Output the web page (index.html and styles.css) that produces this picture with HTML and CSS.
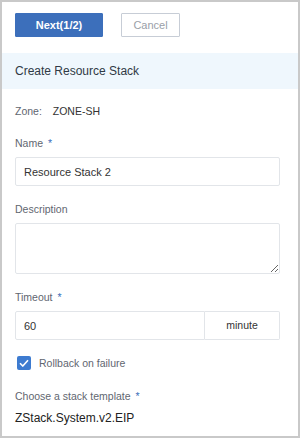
FILE: index.html
```html
<!DOCTYPE html>
<html lang="en">
<head>
    <meta charset="UTF-8">
    <meta name="viewport" content="width=device-width, initial-scale=1.0">
    <title>Create Resource Stack</title>
    <link rel="stylesheet" href="styles.css">
</head>
<body>
    <div class="panel">
        <!-- Actions -->
        <div class="toolbar">
            <button class="btn btn-primary">Next(1/2)</button>
            <button class="btn btn-default">Cancel</button>
        </div>

        <div class="section-title">Create Resource Stack</div>

        <div class="form">
            <div class="zone-row">
                <span class="zone-label">Zone:</span>
                <span class="zone-value">ZONE-SH</span>
            </div>

            <div class="form-group">
                <label>Name <span class="required">*</span></label>
                <input type="text" value="Resource Stack 2">
            </div>

            <div class="form-group">
                <label>Description</label>
                <textarea></textarea>
            </div>

            <div class="form-group">
                <label>Timeout <span class="required">*</span></label>
                <div class="input-group">
                    <input type="text" value="60">
                    <span class="addon">minute</span>
                </div>
            </div>

            <div class="check-row">
                <span class="checkbox">
                    <svg width="10" height="8" viewBox="0 0 10 8">
                        <path d="M1 4.2 L3.8 7 L9 1.2" fill="none" stroke="#fff" stroke-width="1.6"/>
                    </svg>
                </span>
                <span class="check-label">Rollback on failure</span>
            </div>

            <div class="template">
                <label>Choose a stack template <span class="required">*</span></label>
                <div class="template-name">ZStack.System.v2.EIP</div>
            </div>
        </div>
    </div>
</body>
</html>
```

FILE: styles.css
```css
* {
    margin: 0;
    padding: 0;
    box-sizing: border-box;
}

body {
    font-family: 'Liberation Sans', Arial, sans-serif;
    background: white;
    color: #333;
}

.panel {
    width: 300px;
    height: 438px;
    border: 2px solid #c9c9c9;
    overflow: hidden;
}

/* Top buttons */
.toolbar {
    display: flex;
    gap: 18px;
    padding: 11px 13px 16px;
}

.btn {
    height: 24px;
    font-family: inherit;
    font-size: 11px;
    border-radius: 1px;
}

.btn-primary {
    width: 88px;
    background: #3c6fbb;
    border: 1px solid #3c6fbb;
    color: white;
    font-weight: bold;
}

.btn-default {
    width: 59px;
    background: white;
    border: 1px solid #c7cdd6;
    color: #9aa0a8;
}

.section-title {
    height: 36px;
    line-height: 36px;
    padding-left: 13px;
    background: #eff7fd;
    font-size: 12px;
    color: #2f3a45;
}

/* Form */
.form {
    padding: 15px 18px 0 13px;
}

.zone-row {
    font-size: 10.5px;
    line-height: 14px;
    margin-bottom: 18px;
}

.zone-label {
    color: #5f6670;
    margin-right: 8px;
}

.zone-value {
    color: #333;
}

.form-group {
    margin-bottom: 16px;
}

label {
    display: block;
    font-size: 10.5px;
    line-height: 14px;
    color: #5f6670;
    margin-bottom: 7px;
}

.required {
    color: #3c6fbb;
    margin-left: 2px;
}

input, textarea {
    width: 100%;
    border: 1px solid #e2e5e9;
    border-radius: 2px;
    font-family: inherit;
    font-size: 11px;
    color: #333;
    background: white;
}

input {
    height: 29px;
    padding: 0 8px;
}

textarea {
    height: 51px;
    display: block;
}

.input-group {
    display: flex;
}

.input-group input {
    flex: 1;
    border-radius: 2px 0 0 2px;
}

.addon {
    width: 75px;
    height: 29px;
    line-height: 27px;
    text-align: center;
    font-size: 10.5px;
    border: 1px solid #e2e5e9;
    border-left: none;
    border-radius: 0 2px 2px 0;
}

.check-row {
    display: flex;
    align-items: center;
    gap: 8px;
    margin: 2px 0 0 2px;
}

.checkbox {
    width: 14px;
    height: 14px;
    background: #3d7bd0;
    border-radius: 2px;
    display: flex;
    align-items: center;
    justify-content: center;
}

.check-label {
    font-size: 10.5px;
    color: #5f6670;
}

.template {
    margin-top: 19px;
}

.template label {
    margin-bottom: 8px;
}

.template-name {
    font-size: 12px;
    color: #222;
}
```
